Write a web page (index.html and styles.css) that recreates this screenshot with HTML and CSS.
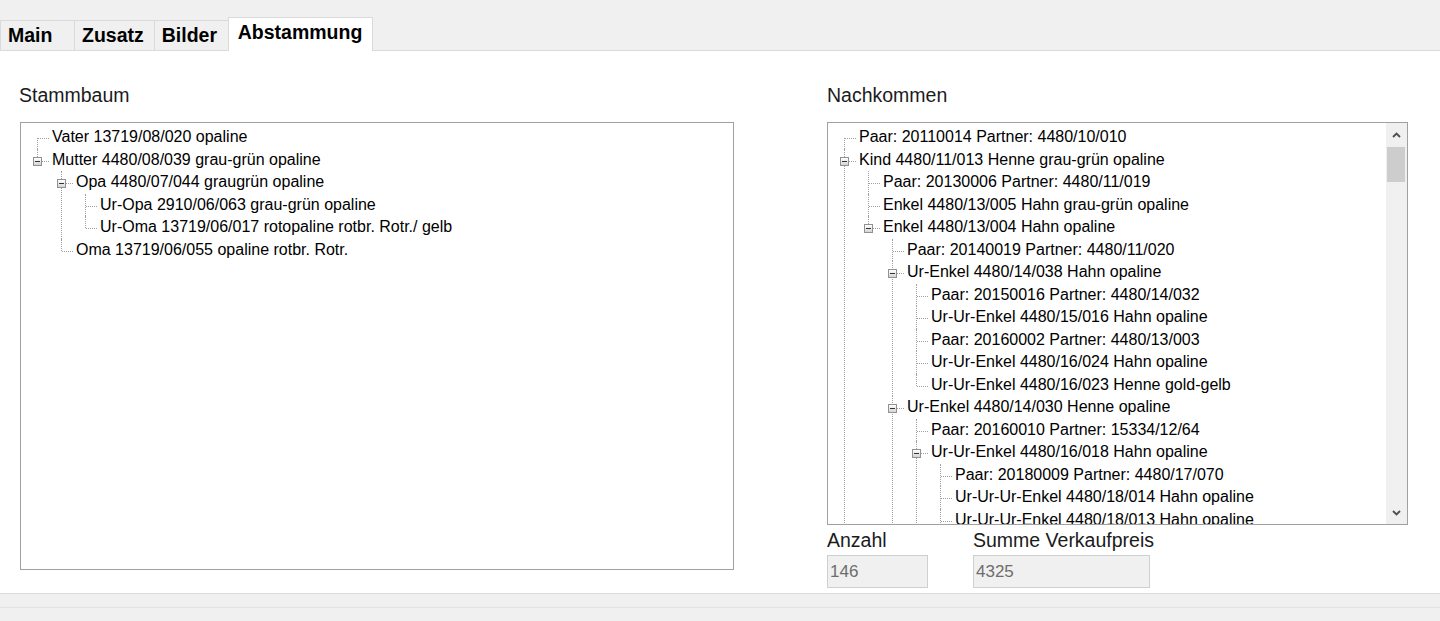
FILE: index.html
```html
<!DOCTYPE html>
<html lang="de">
<head>
  <meta charset="UTF-8">
  <meta name="viewport" content="width=device-width, initial-scale=1.0">
  <title>Abstammung</title>
  <link rel="stylesheet" href="styles.css">
</head>
<body>

  <!-- Tabs -->
  <div class="tabstrip">
    <div class="tab">Main</div>
    <div class="tab">Zusatz</div>
    <div class="tab">Bilder</div>
    <div class="tab tab-active">Abstammung</div>
  </div>

  <div class="panel">

    <!-- Stammbaum -->
    <section class="col col-left">
      <div class="caption">Stammbaum</div>
      <div class="treebox treebox-tall">
        <ul class="tree">
          <li><div class="node">Vater 13719/08/020 opaline</div></li>
          <li>
            <div class="node"><span class="toggle"></span>Mutter 4480/08/039 grau-grün opaline</div>
            <ul>
              <li>
                <div class="node"><span class="toggle"></span>Opa 4480/07/044 graugrün opaline</div>
                <ul>
                  <li><div class="node">Ur-Opa 2910/06/063 grau-grün opaline</div></li>
                  <li><div class="node">Ur-Oma 13719/06/017 rotopaline rotbr. Rotr./ gelb</div></li>
                </ul>
              </li>
              <li><div class="node">Oma 13719/06/055 opaline rotbr. Rotr.</div></li>
            </ul>
          </li>
        </ul>
      </div>
    </section>

    <!-- Nachkommen -->
    <section class="col col-right">
      <div class="caption">Nachkommen</div>
      <div class="treebox treebox-short">
        <div class="tree-view">
          <ul class="tree">
            <li><div class="node">Paar: 20110014 Partner: 4480/10/010</div></li>
            <li class="cont">
              <div class="node"><span class="toggle"></span>Kind 4480/11/013 Henne grau-grün opaline</div>
              <ul>
                <li><div class="node">Paar: 20130006 Partner: 4480/11/019</div></li>
                <li><div class="node">Enkel 4480/13/005 Hahn grau-grün opaline</div></li>
                <li>
                  <div class="node"><span class="toggle"></span>Enkel 4480/13/004 Hahn opaline</div>
                  <ul>
                    <li><div class="node">Paar: 20140019 Partner: 4480/11/020</div></li>
                    <li>
                      <div class="node"><span class="toggle"></span>Ur-Enkel 4480/14/038 Hahn opaline</div>
                      <ul>
                        <li><div class="node">Paar: 20150016 Partner: 4480/14/032</div></li>
                        <li><div class="node">Ur-Ur-Enkel 4480/15/016 Hahn opaline</div></li>
                        <li><div class="node">Paar: 20160002 Partner: 4480/13/003</div></li>
                        <li><div class="node">Ur-Ur-Enkel 4480/16/024 Hahn opaline</div></li>
                        <li><div class="node">Ur-Ur-Enkel 4480/16/023 Henne gold-gelb</div></li>
                      </ul>
                    </li>
                    <li class="cont">
                      <div class="node"><span class="toggle"></span>Ur-Enkel 4480/14/030 Henne opaline</div>
                      <ul>
                        <li><div class="node">Paar: 20160010 Partner: 15334/12/64</div></li>
                        <li class="cont">
                          <div class="node"><span class="toggle"></span>Ur-Ur-Enkel 4480/16/018 Hahn opaline</div>
                          <ul>
                            <li><div class="node">Paar: 20180009 Partner: 4480/17/070</div></li>
                            <li><div class="node">Ur-Ur-Ur-Enkel 4480/18/014 Hahn opaline</div></li>
                            <li class="cont"><div class="node">Ur-Ur-Ur-Enkel 4480/18/013 Hahn opaline</div></li>
                          </ul>
                        </li>
                      </ul>
                    </li>
                  </ul>
                </li>
              </ul>
            </li>
          </ul>
        </div>
        <div class="scrollbar">
          <div class="sb-btn">
            <svg width="9" height="6" viewBox="0 0 9 6"><polyline points="1,5 4.5,1.5 8,5" fill="none" stroke="#505050" stroke-width="1.9"/></svg>
          </div>
          <div class="sb-track"><div class="sb-thumb"></div></div>
          <div class="sb-btn">
            <svg width="9" height="6" viewBox="0 0 9 6"><polyline points="1,1 4.5,4.5 8,1" fill="none" stroke="#505050" stroke-width="1.9"/></svg>
          </div>
        </div>
      </div>

      <div class="totals">
        <label class="total">
          <span class="caption">Anzahl</span>
          <input class="field" value="146" readonly>
        </label>
        <label class="total">
          <span class="caption">Summe Verkaufpreis</span>
          <input class="field field-wide" value="4325" readonly>
        </label>
      </div>
    </section>

  </div>

  <!-- Status bars -->
  <div class="statusbar"></div>
  <div class="statusbar statusbar-lower"></div>

</body>
</html>
```

FILE: styles.css
```css
body {
  margin: 0;
  background-color: #f0f0f0;
  font-family: "Liberation Sans", Arial, sans-serif;
  color: #000000;
  overflow: hidden;
}

/* Tabs */
.tabstrip {
  display: flex;
  align-items: flex-end;
  height: 50px;
  border-bottom: 1px solid #dadada;
}
.tab {
  box-sizing: border-box;
  min-width: 74px;
  height: 30px;
  padding: 0 10px 0 7px;
  border-left: 1px solid #dadada;
  border-top: 1px solid #dadada;
  font-size: 19.5px;
  font-weight: bold;
  line-height: 29px;
  white-space: nowrap;
}
.tab-active {
  height: 34px;
  margin-bottom: -1px;
  padding: 0 10px 5px 9px;
  border-right: 1px solid #dadada;
  background-color: #ffffff;
  line-height: 28px;
}

/* Panel */
.panel {
  box-sizing: border-box;
  height: 542px;
  padding: 33px 0 0 19px;
  display: flex;
  gap: 93px;
  background-color: #ffffff;
}
.col-left {
  width: 715px;
}
.col-right {
  width: 581px;
}
.caption {
  display: block;
  font-size: 19.5px;
  line-height: 22px;
  color: #1b1b1b;
}

.treebox {
  box-sizing: border-box;
  margin-top: 16px;
  border: 1px solid #a0a0a0;
  background-color: #ffffff;
  overflow: hidden;
}
.treebox-tall {
  height: 448px;
  margin-left: 1px;
}
.treebox-short {
  height: 403px;
  display: flex;
}
.tree-view {
  flex: 1;
  overflow: hidden;
}

/* Tree view */
.tree {
  list-style: none;
  margin: 0;
  padding: 3px 0 0 0;
  font-size: 16px;
  line-height: 22.5px;
  white-space: nowrap;
}
.tree ul {
  list-style: none;
  margin: 0 0 0 24px;
  padding: 0;
}
.tree li {
  position: relative;
}
.tree li::before {
  content: "";
  position: absolute;
  left: 16px;
  top: 0;
  bottom: 0;
  border-left: 1px dotted #a0a0a0;
}
.tree li:last-child::before {
  bottom: auto;
  height: 12px;
}
.tree li.cont::before {
  bottom: 0;
  height: auto;
}
.tree > li:first-child::before {
  top: 12px;
}
.node {
  position: relative;
  padding-left: 31px;
}
.node::before {
  content: "";
  position: absolute;
  left: 17px;
  top: 12px;
  width: 11px;
  border-top: 1px dotted #a0a0a0;
}
.toggle {
  position: absolute;
  left: 12px;
  top: 8px;
  width: 9px;
  height: 9px;
  box-sizing: border-box;
  border: 1px solid #919191;
  background: linear-gradient(#ffffff, #d4d4d4);
}
.toggle::after {
  content: "";
  position: absolute;
  left: 1px;
  top: 3px;
  width: 5px;
  height: 1px;
  background-color: #333333;
}

/* Scrollbar */
.scrollbar {
  width: 21px;
  display: flex;
  flex-direction: column;
  background-color: #f0f0f0;
}
.sb-btn {
  height: 23px;
  display: flex;
  align-items: center;
  justify-content: center;
}
.sb-track {
  flex: 1;
}
.sb-thumb {
  height: 35px;
  margin: 1px 2px 0 1px;
  background-color: #cdcdcd;
}

/* Totals */
.totals {
  display: flex;
  gap: 45px;
  margin-top: 4px;
}
.total {
  display: flex;
  flex-direction: column;
  gap: 4px;
}
.field {
  box-sizing: border-box;
  width: 101px;
  height: 33px;
  margin: 0;
  padding: 0 2px;
  border: 1px solid #cfcfcf;
  background-color: #f0f0f0;
  color: #6d6d6d;
  font-family: "Liberation Sans", Arial, sans-serif;
  font-size: 17px;
  outline: none;
}
.field-wide {
  width: 177px;
}

/* Status bars */
.statusbar {
  height: 13px;
  border-top: 1px solid #dcdcdc;
}
.statusbar-lower {
  height: 20px;
  border-top-color: #e2e2e2;
}
```
